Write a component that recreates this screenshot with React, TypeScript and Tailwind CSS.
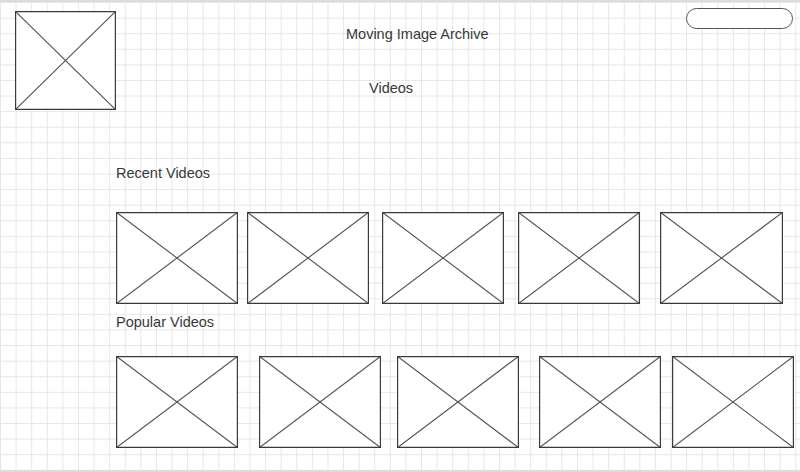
import React from "react";

function Placeholder({ className }: { className: string }) {
  return (
    <div className={`relative shrink-0 bg-white ${className}`}>
      <svg className="absolute inset-0 h-full w-full" preserveAspectRatio="none" viewBox="0 0 100 100">
        <line x1="0" y1="0" x2="100" y2="100" stroke="#505050" strokeWidth="1.1" vectorEffect="non-scaling-stroke" />
        <line x1="100" y1="0" x2="0" y2="100" stroke="#505050" strokeWidth="1.1" vectorEffect="non-scaling-stroke" />
        <rect x="0" y="0" width="100" height="100" fill="none" stroke="#3a3a3a" strokeWidth="2.4" vectorEffect="non-scaling-stroke" />
      </svg>
    </div>
  );
}

export default function App() {
  return (
    <div
      className="relative w-[800px] h-[472px] overflow-hidden bg-white border-t-2 border-b-2 border-[#dcdcdc] bg-[linear-gradient(to_right,#e6e6e6_1px,transparent_1px),linear-gradient(to_bottom,#e6e6e6_1px,transparent_1px)] bg-[size:15.6px_15.6px] bg-[position:0_0] text-[14.5px] leading-4 text-[#383838]"
      style={{ fontFamily: '"Liberation Sans", Arial, sans-serif' }}
    >
      {/* header */}
      <div className="flex items-start h-[108px]">
        <Placeholder className="ml-[15px] mt-[9px] w-[101px] h-[99px]" />
        <div className="ml-[230px] flex flex-col">
          <div className="mt-[24px] whitespace-nowrap">Moving Image Archive</div>
          <div className="ml-[23px] mt-[38px]">Videos</div>
        </div>
        <div className="ml-auto mr-[7px] mt-[6px] w-[107px] h-[21px] rounded-full border border-[#555] bg-white" />
      </div>

      <div className="ml-[116px] mt-[55px]">Recent Videos</div>
      <div className="flex mt-[31px]">
        <Placeholder className="ml-[116px] w-[122px] h-[92px]" />
        <Placeholder className="ml-[9px] w-[122px] h-[92px]" />
        <Placeholder className="ml-[13px] w-[122px] h-[92px]" />
        <Placeholder className="ml-[14px] w-[122px] h-[92px]" />
        <Placeholder className="ml-[20px] w-[123px] h-[92px]" />
      </div>

      <div className="ml-[116px] mt-[10px]">Popular Videos</div>
      <div className="flex mt-[26px]">
        <Placeholder className="ml-[116px] w-[122px] h-[92px]" />
        <Placeholder className="ml-[21px] w-[122px] h-[92px]" />
        <Placeholder className="ml-[16px] w-[122px] h-[92px]" />
        <Placeholder className="ml-[20px] w-[122px] h-[92px]" />
        <Placeholder className="ml-[11px] w-[122px] h-[92px]" />
      </div>
    </div>
  );
}
